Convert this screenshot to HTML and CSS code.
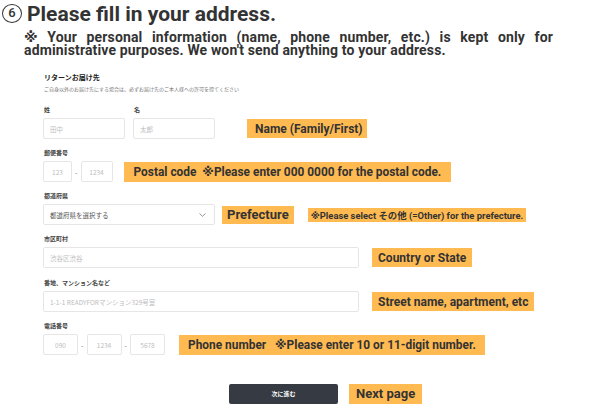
FILE: index.html
```html
<!DOCTYPE html>
<html lang="ja">
<head>
<meta charset="utf-8">
<link rel="stylesheet" href="styles.css">
</head>
<body>
<h1 class="title"><span class="num">6</span><span>Please fill in your address.</span></h1>
<p class="note">※&#8197;Your personal information (name, phone number, etc.) is kept only for administrative purposes. We won't send anything to your address.</p>

<section class="form">
  <div class="form-title">リターンお届け先</div>
  <div class="form-sub">ご自身以外のお届け先にする場合は、必ずお届け先のご本人様への許可を得てください</div>

  <div class="group">
    <div class="labels"><span class="lab lab-name">姓</span><span class="lab">名</span></div>
    <div class="row">
      <input class="inp w-name" placeholder="田中">
      <input class="inp w-name" placeholder="太郎">
      <span class="tag tag-name">Name (Family/First)</span>
    </div>
  </div>

  <div class="group">
    <div class="lab">郵便番号</div>
    <div class="row">
      <input class="inp c w-zip1" placeholder="123">
      <span class="dash">-</span>
      <input class="inp c w-zip2" placeholder="1234">
      <span class="tag tag-zip">Postal code &nbsp;※Please enter 000 0000 for the postal code.</span>
    </div>
  </div>

  <div class="group">
    <div class="lab">都道府県</div>
    <div class="row">
      <div class="inp select">
        <span>都道府県を選択する</span>
        <svg class="chev" width="7" height="4" viewBox="0 0 7 4"><path d="M0.5 0.5 L3.5 3.3 L6.5 0.5" fill="none" stroke="#888" stroke-width="0.9"/></svg>
      </div>
      <span class="tag tag-pref">Prefecture</span>
      <span class="tag tag-small">※Please select その他 (=Other) for the prefecture.</span>
    </div>
  </div>

  <div class="group">
    <div class="lab">市区町村</div>
    <div class="row">
      <input class="inp w-wide" placeholder="渋谷区渋谷">
      <span class="tag tag-wide">Country or State</span>
    </div>
  </div>

  <div class="group g-street">
    <div class="lab">番地、マンション名など</div>
    <div class="row">
      <input class="inp w-wide" placeholder="1-1-1 READYFORマンション329号室">
      <span class="tag tag-wide">Street name, apartment, etc</span>
    </div>
  </div>

  <div class="group">
    <div class="lab">電話番号</div>
    <div class="row">
      <input class="inp c w-tel" placeholder="090">
      <span class="dash">-</span>
      <input class="inp c w-tel" placeholder="1234">
      <span class="dash">-</span>
      <input class="inp c w-tel" placeholder="5678">
      <span class="tag tag-tel">Phone number &nbsp;&nbsp;※Please enter 10 or 11-digit number.</span>
    </div>
  </div>

  <div class="row btn-row">
    <button class="btn" type="button">次に進む</button>
    <span class="tag tag-next">Next page</span>
  </div>
</section>
</body>
</html>
```

FILE: styles.css
```css
* { box-sizing: border-box; }

body {
  margin: 0;
  width: 600px;
  height: 414px;
  overflow: hidden;
  background: #fff;
  color: #333;
  font-family: Roboto, "DejaVu Sans", "Noto Sans CJK JP", sans-serif;
}

.title {
  margin: 0;
  padding: 1px 0 0 2px;
  height: 26px;
  display: flex;
  align-items: center;
  gap: 5px;
  font-size: 21px;
  font-weight: 700;
  line-height: 24px;
}

.num {
  width: 20px;
  height: 19px;
  border: 1.5px solid #333;
  border-radius: 50%;
  font-size: 13px;
  line-height: 16px;
  text-align: center;
  font-weight: 500;
}

.note {
  margin: 5px 0 0 24px;
  width: 529px;
  font-size: 14px;
  font-weight: 700;
  line-height: 13px;
  letter-spacing: 0.15px;
  text-align: justify;
}

.form {
  padding-left: 43px;
  font-family: "Noto Sans CJK JP", sans-serif;
}

.form-title {
  margin-top: 15px;
  padding-left: 1px;
  font-size: 7px;
  font-weight: 700;
  line-height: 10px;
  color: #222;
}

.form-sub {
  margin-top: 3px;
  padding-left: 1px;
  font-size: 5px;
  line-height: 8px;
  color: #777;
}

.group { margin-top: 12px; }
.group + .group { margin-top: 9px; }
.group.g-street { margin-top: 10px; }

.labels { display: flex; }

.lab {
  height: 10px;
  margin-bottom: 3px;
  padding-left: 1px;
  font-size: 6px;
  font-weight: 700;
  line-height: 10px;
  color: #444;
}

.lab-name { width: 90px; }

.row {
  display: flex;
  align-items: center;
  height: 21px;
}

.inp {
  height: 21px;
  margin: 0;
  padding: 0 0 0 6px;
  border: 1px solid #e6e6e6;
  border-radius: 2px;
  background: #fff;
  font-family: "Noto Sans CJK JP", Roboto, sans-serif;
  font-size: 6.5px;
  color: #333;
  outline: none;
}

.inp::placeholder { color: #bdbdbd; }
.inp.c { padding: 0; text-align: center; }

.w-name { width: 82px; }
.w-name + .w-name { margin-left: 8px; }
.w-zip1 { width: 29px; }
.w-zip2 { width: 32px; }
.w-wide { width: 316px; }
.w-tel { width: 35px; }

.dash {
  width: 8.5px;
  text-align: center;
  font-size: 7px;
  color: #777;
}

.select {
  width: 172px;
  display: flex;
  align-items: center;
  justify-content: space-between;
  padding-right: 8px;
  color: #555;
}

.tag {
  display: inline-flex;
  align-items: center;
  height: 19px;
  padding: 0 8px;
  background: #ffba52;
  color: #333;
  font-family: Roboto, "DejaVu Sans", "Noto Sans CJK JP", sans-serif;
  font-size: 12px;
  font-weight: 700;
  white-space: nowrap;
}

.tag-name { margin-left: 32px; width: 120px; padding: 0 8px; }
.tag-zip { margin-left: 11px; height: 20px; padding: 0 10px; font-size: 11.9px; }
.tag-pref { margin-left: 7px; height: 18px; padding: 0 5px; font-size: 13px; }
.tag-small {
  margin-left: 14px;
  height: 14px;
  padding: 0 3px;
  font-size: 9.4px;
}
.tag-wide { margin-left: 13px; padding: 0 6px; }
.tag-tel { margin-left: 14px; height: 20px; padding: 0 9px; font-size: 11.9px; }

.btn-row { margin-top: 28px; padding-left: 186px; height: 21px; }

.btn {
  width: 109px;
  height: 20px;
  border: none;
  border-radius: 2px;
  background: #363b43;
  color: #fff;
  font-family: "Noto Sans CJK JP", sans-serif;
  font-size: 6px;
  font-weight: 700;
}

.tag-next { margin-left: 11px; height: 20px; padding: 0 7px; font-size: 13px; }
```
